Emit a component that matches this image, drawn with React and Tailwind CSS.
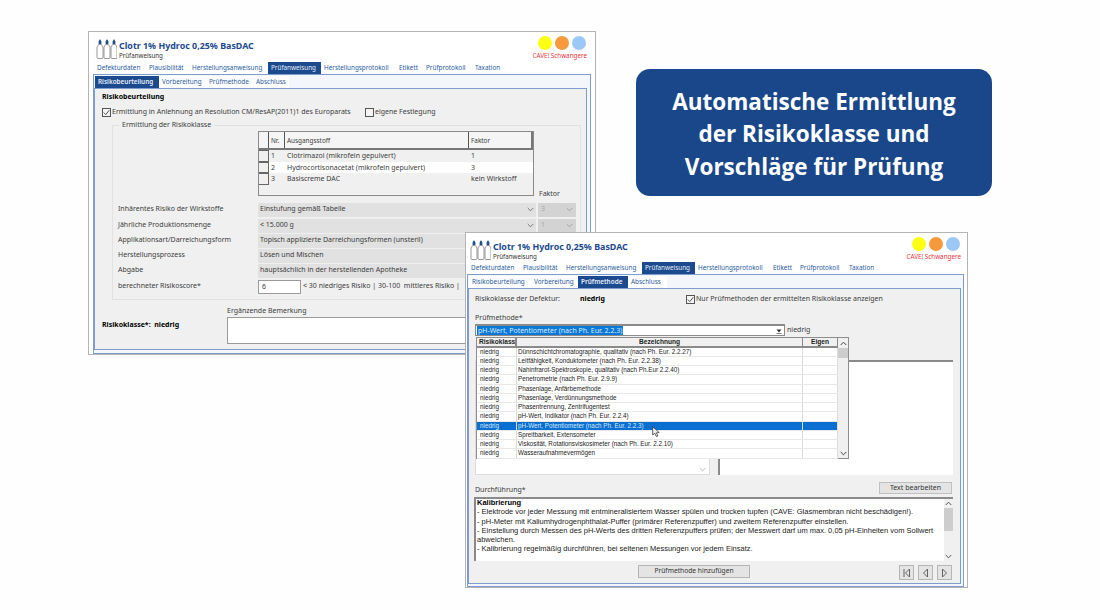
import React from "react";

const ui = "font-['Noto_Sans',sans-serif]";
const arial = "font-['Liberation_Sans',Arial,sans-serif]";

function Vials() {
  const xs = [0, 7, 14];
  return (
    <svg width="21" height="20" viewBox="0 0 21 20" className="shrink-0">
      {xs.map((x) => (
        <g key={x}>
          <path d={`M${x + 2.6} 2.5 L${x + 3.6} 0.5 L${x + 4.4} 0.5 L${x + 5.4} 2.5 L${x + 5.4} 5 L${x + 2.6} 5 Z`} fill="#1f4f91" />
          <path d={`M${x + 2.6} 5.5 L${x + 5.4} 5.5 L${x + 7} 8 L${x + 7} 18.5 Q${x + 7} 19.5 ${x + 6} 19.5 L${x + 2} 19.5 Q${x + 1} 19.5 ${x + 1} 18.5 L${x + 1} 8 Z`} fill="#fff" stroke="#8c8c8c" strokeWidth="0.9" />
        </g>
      ))}
    </svg>
  );
}

function Chevron({ up = false, color = "#777", className = "" }) {
  return (
    <svg width="7" height="5" viewBox="0 0 7 5" className={className}>
      <path d={up ? "M0.7 4 L3.5 1.2 L6.3 4" : "M0.7 1 L3.5 3.8 L6.3 1"} fill="none" stroke={color} strokeWidth="1" />
    </svg>
  );
}

function Check({ checked }) {
  return (
    <span className="flex h-[9px] w-[9px] shrink-0 items-center justify-center border border-[#555] bg-[#f4f4f4]">
      {checked && (
        <svg width="7" height="7" viewBox="0 0 7 7">
          <path d="M0.8 3.6 L2.8 5.6 L6.3 1.2" fill="none" stroke="#444" strokeWidth="0.9" />
        </svg>
      )}
    </span>
  );
}

function Header({ padClass }) {
  return (
    <div className={`flex justify-between ${padClass}`}>
      <div className="flex gap-[2px] pt-[7px]">
        <Vials />
        <div className="flex flex-col">
          <span className={`h-[13px] whitespace-nowrap text-[8.9px] font-bold leading-[13px] text-[#1b4a8e] ${ui}`}>Clotr 1% Hydroc 0,25% BasDAC</span>
          <span className={`h-[9px] text-[6.2px] leading-[7px] text-[#333] ${ui}`}>Prüfanweisung</span>
        </div>
      </div>
      <div className="flex flex-col items-end pt-[4px]">
        <div className="mr-[1px] flex gap-[3px]">
          <span className="h-[14px] w-[14px] rounded-full bg-[#ffff14]" />
          <span className="h-[14px] w-[14px] rounded-full bg-[#f79a3e]" />
          <span className="h-[14px] w-[14px] rounded-full bg-[#9cc8f7]" />
        </div>
        <span className={`mt-[1px] h-[9px] whitespace-nowrap text-[6.3px] leading-[9px] text-[#e8353a] ${ui}`}>CAVE! Schwangere</span>
      </div>
    </div>
  );
}

const mainTabs = [
  ["Defekturdaten", "w-[52px]"],
  ["Plausibilität", "w-[43px]"],
  ["Herstellungsanweisung", "w-[79px]"],
  ["Prüfanweisung", "w-[53px]"],
  ["Herstellungsprotokoll", "w-[75px]"],
  ["Etikett", "w-[27px]"],
  ["Prüfprotokoll", "w-[49px]"],
  ["Taxation", "w-[38px]"],
];

function MainTabs({ marginClass }) {
  return (
    <div className={`flex h-[12px] ${marginClass}`}>
      {mainTabs.map(([t, w]) => (
        <span
          key={t}
          className={`${w} shrink-0 whitespace-nowrap pl-[3px] text-[6.35px] leading-[12px] ${ui} ${t === "Prüfanweisung" ? "bg-[#1b4a8e] text-[#e8eef8]" : "text-[#2a5b9c]"}`}
        >
          {t}
        </span>
      ))}
    </div>
  );
}

const subTabs = [
  ["Risikobeurteilung", "w-[64px]"],
  ["Vorbereitung", "w-[47px]"],
  ["Prüfmethode", "w-[47px]"],
  ["Abschluss", "w-[36px]"],
];
const subTabs2 = [
  ["Risikobeurteilung", "w-[62px]"],
  ["Vorbereitung", "w-[47px]"],
  ["Prüfmethode", "w-[50px]"],
  ["Abschluss", "w-[39px]"],
];

function SubTabs({ tabs, active, marginClass }) {
  return (
    <div className={`flex h-[12px] ${marginClass}`}>
      {tabs.map(([t, w]) => (
        <span
          key={t}
          className={`${w} shrink-0 whitespace-nowrap pl-[3px] text-[6.4px] leading-[12px] ${ui} ${t === active ? "bg-[#1b4a8e] font-semibold text-[#e8eef8]" : "bg-white text-[#2a5b9c]"}`}
        >
          {t}
        </span>
      ))}
    </div>
  );
}

const rows1 = [
  ["Inhärentes Risiko der Wirkstoffe", "Einstufung gemäß Tabelle", "3", "mt-0"],
  ["Jährliche Produktionsmenge", "< 15.000 g", "1", "mt-[2px]"],
  ["Applikationsart/Darreichungsform", "Topisch applizierte Darreichungsformen (unsteril)", "", "mt-[1px]"],
  ["Herstellungsprozess", "Lösen und Mischen", "", "mt-[1px]"],
  ["Abgabe", "hauptsächlich in der herstellenden Apotheke", "", "mt-[1px]"],
];

const stoffe = [
  ["1", "Clotrimazol (mikrofein gepulvert)", "1", "bg-[#f0f0f0]"],
  ["2", "Hydrocortisonacetat (mikrofein gepulvert)", "3", "bg-white"],
  ["3", "Basiscreme DAC", "kein Wirkstoff", "bg-[#f0f0f0]"],
];

function Window1() {
  return (
    <div className={`absolute left-[88px] top-[31px] flex h-[324px] w-[508px] flex-col border border-[#b4b4b4] bg-white text-[#3c3c3c] ${ui}`}>
      <div className="h-[30px]"><Header padClass="pl-[7px] pr-[8px]" /></div>
      <MainTabs marginClass="ml-[5px]" />
      <div className="ml-[4px] mr-[4px] flex flex-1 flex-col border border-[#7f9dcb] bg-[#f3f6fa] pb-[3px] pr-[3px] pt-[1px]">
        <SubTabs tabs={subTabs} active="Risikobeurteilung" marginClass="ml-[1px]" />
        <div className="flex flex-1 flex-col border border-[#7f9dcb] bg-[#f0f0f0] pl-[7px] pt-[3px] text-[7px]">
          <div className="h-[10px] font-bold leading-[10px] text-black">Risikobeurteilung</div>
          <div className="mt-[5px] flex h-[10px] items-center leading-[10px]">
            <Check checked />
            <span className="ml-[1px] w-[253px] whitespace-nowrap">Ermittlung in Anlehnung an Resolution CM/ResAP(2011)1 des Europarats</span>
            <Check />
            <span className="ml-[1px] whitespace-nowrap">eigene Festlegung</span>
          </div>
          <fieldset className="ml-[10px] mr-[5px] mt-[3px] h-[180px] border border-[#e2e2e2] pl-[5px]">
            <legend className="ml-[1px] px-[3px] leading-[10px]">Ermittlung der Risikoklasse</legend>
            <div className="ml-[140px] mt-[1px] flex h-[70px] items-start">
              <div className="h-[65px] w-[276px] border border-[#8a8a8a] bg-[#f0f0f0]">
                <div className="flex h-[18px] border-b-2 border-[#777] bg-[#f5f5f5]">
                  <span className="w-[10px] border-r border-[#555]" />
                  <span className="w-[16px] border-r border-[#555] pl-[2px] text-[6.4px] leading-[17px]">Nr.</span>
                  <span className="w-[184px] border-r border-[#555] pl-[2px] text-[6.4px] leading-[17px]">Ausgangsstoff</span>
                  <span className="flex-1 border-r-2 border-[#777] pl-[2px] text-[6.4px] leading-[17px]">Faktor</span>
                </div>
                {stoffe.map(([n, s, f, bg]) => (
                  <div key={n} className={`flex h-[11.5px] leading-[11.5px] ${bg}`}>
                    <span className="w-[10px] border border-l-0 border-[#666] bg-[#f0f0f0]" />
                    <span className="w-[16px] pl-[2px]">{n}</span>
                    <span className="w-[184px] pl-[2px]">{s}</span>
                    <span className="flex-1 pl-[2px]">{f}</span>
                  </div>
                ))}
              </div>
              <span className="ml-[5px] mt-[58px] leading-[10px]">Faktor</span>
            </div>
            <div className="mt-[1.5px] flex flex-col">
              {rows1.map(([l, v, f, m]) => (
                <div key={l} className={`flex h-[14px] items-center ${m}`}>
                  <span className="w-[140px] shrink-0 whitespace-nowrap">{l}</span>
                  <div className="flex h-full w-[278px] items-center justify-between bg-[#e1e1e1] pl-[2px] pr-[2px]">
                    <span className="whitespace-nowrap">{v}</span>
                    <Chevron />
                  </div>
                  {f && (
                    <div className="ml-[2px] flex h-full w-[38px] items-center justify-between bg-[#d3d3d3] pl-[3px] pr-[3px] text-[#a8a8a8]">
                      <span>{f}</span>
                      <Chevron color="#a8a8a8" />
                    </div>
                  )}
                </div>
              ))}
              <div className="mt-[2px] flex h-[14px] items-center">
                <span className="w-[140px] shrink-0">berechneter Risikoscore*</span>
                <span className="h-full w-[43px] border border-[#9a9a9a] bg-white pl-[3px] leading-[12px]">6</span>
                <span className="ml-[2px] whitespace-nowrap">&lt; 30 niedriges Risiko | 30-100&nbsp; mittleres Risiko |</span>
              </div>
            </div>
          </fieldset>
          <div className="mt-[6px] flex">
            <div className="w-[125px] pt-[14px] font-bold leading-[10px] text-black">Risikoklasse*:&nbsp; niedrig</div>
            <div className="flex flex-1 flex-col pr-[6px]">
              <span className="h-[11px] leading-[10px]">Ergänzende Bemerkung</span>
              <div className="h-[27px] border border-[#9a9a9a] bg-white" />
            </div>
          </div>
        </div>
      </div>
    </div>
  );
}

const methods = [
  "Dünnschichtchromatographie, qualitativ (nach Ph. Eur. 2.2.27)",
  "Leitfähigkeit, Konduktometer (nach Ph. Eur. 2.2.38)",
  "Nahinfrarot-Spektroskopie, qualitativ (nach Ph.Eur 2.2.40)",
  "Penetrometrie (nach Ph. Eur. 2.9.9)",
  "Phasenlage, Anfärbemethode",
  "Phasenlage, Verdünnungsmethode",
  "Phasentrennung, Zentrifugentest",
  "pH-Wert, Indikator (nach Ph. Eur. 2.2.4)",
  "pH-Wert, Potentiometer (nach Ph. Eur. 2.2.3)",
  "Spreitbarkeit, Extensometer",
  "Viskosität, Rotationsviskosimeter (nach Ph. Eur. 2.2.10)",
  "Wasseraufnahmevermögen",
];

function Dropdown() {
  return (
    <div className={`absolute left-[7px] top-[48px] z-10 flex h-[122px] w-[373px] border border-[#8e8e8e] bg-white text-[6.3px] text-[#222] ${arial}`}>
      <div className="flex w-[361px] flex-col">
        <div className="flex h-[9.5px] border-b-2 border-[#8a8a8a] bg-[#f0f0f0] text-[6.6px] font-bold leading-[8.5px] text-[#222]">
          <span className="w-[40px] overflow-hidden whitespace-nowrap border-r-2 border-[#8a8a8a] pl-[2px]">Risikoklass</span>
          <span className="w-[286px] border-r border-[#8a8a8a] text-center">Bezeichnung</span>
          <span className="flex-1 border-r border-[#8a8a8a] text-center">Eigen</span>
        </div>
        {methods.map((m, i) => (
          <div
            key={m}
            className={`flex h-[9.25px] shrink-0 border-b border-[#e8e8e8] leading-[8.5px] ${i === 8 ? "bg-[#0a6fd0] text-[#d8e8fa]" : ""}`}
          >
            <span className="w-[40px] border-r border-[#dcdcdc] pl-[3px]">niedrig</span>
            <span className="w-[286px] whitespace-nowrap border-r border-[#dcdcdc] pl-[1px]">{m}</span>
            <span className="flex-1 border-r border-[#dcdcdc]" />
          </div>
        ))}
      </div>
      <div className="flex flex-1 flex-col items-center bg-[#f0f0f0]">
        <div className="flex h-[10px] items-center"><Chevron up color="#444" /></div>
        <div className="h-[10px] w-full bg-[#cdcdcd]" />
        <div className="flex-1" />
        <div className="flex h-[10px] items-center"><Chevron color="#444" /></div>
      </div>
    </div>
  );
}

function NavBtn({ d }) {
  return (
    <span className="flex h-[15px] w-[15px] items-center justify-center border border-[#b5b5b5] bg-[#e4e4e4]">
      <svg width="9" height="10" viewBox="0 0 9 10">
        <path d={d} fill="none" stroke="#555" strokeWidth="0.9" />
      </svg>
    </span>
  );
}

function Window2() {
  return (
    <div className={`absolute left-[465px] top-[232px] z-10 flex h-[356px] w-[503px] flex-col border border-[#b4b4b4] bg-white text-[#3c3c3c] ${ui}`}>
      <div className="h-[29px]"><Header padClass="pl-[4px] pr-[6px]" /></div>
      <MainTabs marginClass="ml-[2px]" />
      <div className="ml-[1px] mr-[3px] flex flex-1 flex-col border border-[#7f9dcb] bg-[#f3f6fa] pb-[2px] pr-[2px] pt-[1px]">
        <SubTabs tabs={subTabs2} active="Prüfmethode" marginClass="ml-[1px]" />
        <div className="relative flex flex-1 flex-col border border-[#7f9dcb] bg-[#f0f0f0] pl-[6px] pr-[7px] text-[7px]">
          <div className="mt-[5px] flex h-[10px] items-center leading-[10px]">
            <span className="w-[105px] whitespace-nowrap">Risikoklasse der Defektur:</span>
            <span className="w-[106px] font-bold text-black">niedrig</span>
            <Check checked />
            <span className="ml-[1px] whitespace-nowrap">Nur Prüfmethoden der ermittelten Risikoklasse anzeigen</span>
          </div>
          <div className="mt-[9px] h-[10px] leading-[10px]">Prüfmethode*</div>
          <div className="mt-[1px] flex h-[12px] items-center">
            <div className="flex h-full w-[310px] items-center justify-between border border-t-2 border-[#8a8a8a] bg-white pl-[1px] pr-[2px]">
              <span className="whitespace-nowrap bg-[#0a78d7] px-[1px] leading-[9px] text-[#dcecfb]">pH-Wert, Potentiometer (nach Ph. Eur. 2.2.3)</span>
              <svg width="6" height="6" viewBox="0 0 6 6"><path d="M0.5 1.5 L5.5 1.5 L3 4.5 Z" fill="#333" /><path d="M0.5 5.5 L5.5 5.5" stroke="#333" strokeWidth="0.6" /></svg>
            </div>
            <span className="ml-[2px]">niedrig</span>
          </div>
          <div className="mt-[24px] flex h-[115px] gap-[8px]">
            <div className="flex w-[235px] items-end justify-end border border-[#dcdcdc] bg-white pb-[2px] pr-[3px]">
              <Chevron color="#bbb" />
            </div>
            <div className="w-[236px] border-l-2 border-t-2 border-[#8a8a8a] bg-white" />
          </div>
          <div className="mt-[7px] flex h-[12px] items-start justify-between pr-[1px]">
            <span className="pt-[3px] leading-[10px]">Durchführung*</span>
            <span className="flex h-full w-[73px] items-center justify-center border border-[#c0c0c0] bg-[#e4e4e4] text-[#333]">Text bearbeiten</span>
          </div>
          <div className={`-ml-[1px] mt-[3px] flex h-[64px] border-l-2 border-t-2 border-[#8a8a8a] bg-white text-[7.5px] leading-[9.25px] text-[#222] ${arial}`}>
            <div className="-mt-[1px] flex-1 pl-[1px] pr-[2px]">
              <div className="font-bold text-black">Kalibrierung</div>
              <div>- Elektrode vor jeder Messung mit entmineralisiertem Wasser spülen und trocken tupfen (CAVE: Glasmembran nicht beschädigen!).</div>
              <div>- pH-Meter mit Kaliumhydrogenphthalat-Puffer (primärer Referenzpuffer) und zweitem Referenzpuffer einstellen.</div>
              <div>- Einstellung durch Messen des pH-Werts des dritten Referenzpuffers prüfen; der Messwert darf um max. 0,05 pH-Einheiten vom Sollwert abweichen.</div>
              <div>- Kalibrierung regelmäßig durchführen, bei seltenen Messungen vor jedem Einsatz.</div>
            </div>
            <div className="flex w-[9px] shrink-0 flex-col items-center bg-[#f0f0f0]">
              <div className="flex h-[9px] items-center"><Chevron up color="#555" /></div>
              <div className="h-[23px] w-full bg-[#cdcdcd]" />
              <div className="flex-1" />
              <div className="flex h-[9px] items-center"><Chevron color="#555" /></div>
            </div>
          </div>
          <div className="mt-[4px] flex h-[15px] items-start">
            <span className="ml-[163px] flex h-[13px] w-[112px] items-center justify-center whitespace-nowrap border border-[#b5b5b5] bg-[#e4e4e4] text-[6.7px] text-[#333]">Prüfmethode hinzufügen</span>
            <div className="ml-auto mr-[1px] flex gap-[4px]">
              <NavBtn d="M2 1 L2 9 M7.5 1 L3.5 5 L7.5 9 Z" />
              <NavBtn d="M6.5 1 L2.5 5 L6.5 9 Z" />
              <NavBtn d="M2.5 1 L6.5 5 L2.5 9 Z" />
            </div>
          </div>
          <Dropdown />
          <svg width="9" height="12" viewBox="0 0 9 12" className="absolute left-[183px] top-[137px] z-20">
            <path d="M0.7 0.7 L0.7 9 L2.8 7.2 L4.3 10.6 L5.8 10 L4.4 6.8 L7.2 6.6 Z" fill="#f2f2f2" stroke="#222" strokeWidth="0.7" />
          </svg>
        </div>
      </div>
    </div>
  );
}

export default function App() {
  return (
    <div className="relative h-[610px] w-[1100px] overflow-hidden bg-[#fefefe]">
      <Window1 />
      <div className="absolute left-[636px] top-[69px] flex h-[127px] w-[356px] flex-col items-center justify-center rounded-[14px] bg-[#1a478a] pt-[4px] font-['Open_Sans',sans-serif] text-[22.5px] font-bold leading-[32.5px] text-white">
        <span>Automatische Ermittlung</span>
        <span>der Risikoklasse und</span>
        <span>Vorschläge für Prüfung</span>
      </div>
      <Window2 />
    </div>
  );
}
